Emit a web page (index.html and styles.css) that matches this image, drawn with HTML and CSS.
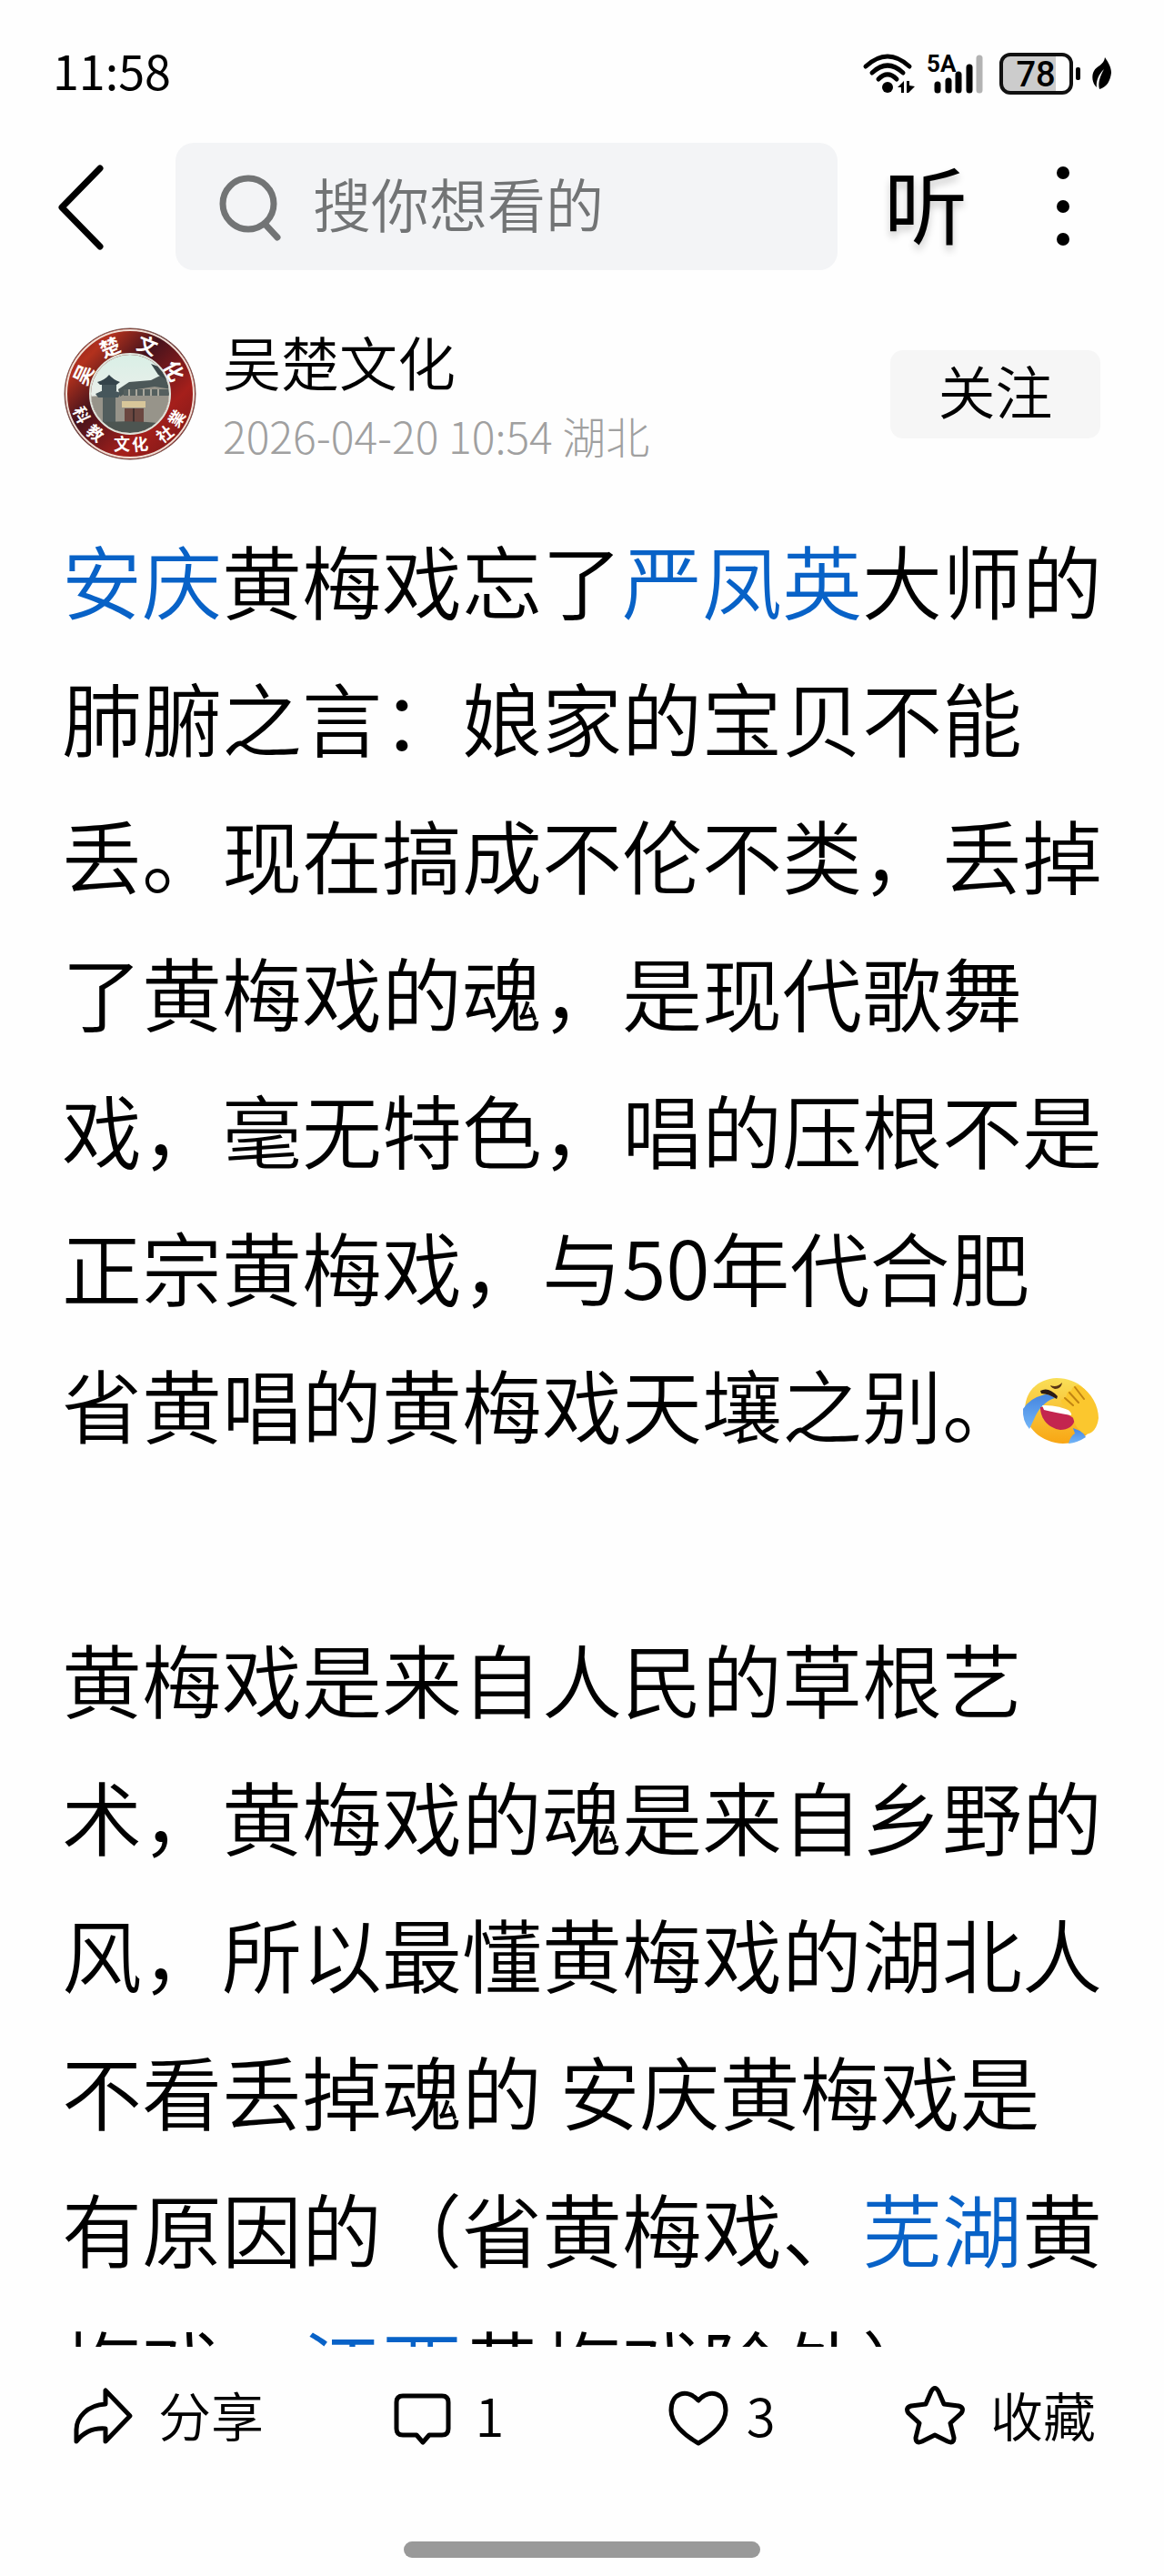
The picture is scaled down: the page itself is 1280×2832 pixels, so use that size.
FILE: index.html
```html
<!DOCTYPE html>
<html lang="zh-CN">
<head>
    <meta charset="UTF-8">
    <meta name="viewport" content="width=device-width, initial-scale=1.0">
    <title>吴楚文化</title>
    <link rel="stylesheet" href="styles.css">
</head>
<body>
    <!-- Status bar -->
    <div class="status-bar">
        <span class="time">11:58</span>
        <div class="status-icons">
            <svg class="wifi" width="58" height="46" viewBox="0 0 58 46">
                <g fill="none" stroke="#000" stroke-width="5" stroke-linecap="round">
                    <path d="M4 15Q28 -7 52 15"/>
                    <path d="M11 22Q28 6 45 22"/>
                    <path d="M18 29Q28 19 38 29"/>
                </g>
                <circle cx="28" cy="38" r="6"/>
                <path d="M39 38L46 31V44H43V38ZM49 31H52V36L58 37L51 44H49Z"/>
            </svg>
            <svg class="signal" width="66" height="46" viewBox="0 0 66 46">
                <text x="2" y="21" class="net">5A</text>
                <g stroke="#000" stroke-width="7" stroke-linecap="round">
                    <path d="M14 35V41M26 31V41M37 24V41M49 16V41"/>
                    <path d="M60 6V41" stroke="#b3b3b3"/>
                </g>
            </svg>
            <svg class="battery" width="90" height="46" viewBox="0 0 90 46">
                <path d="M12 2H62V44H12Q2 44 2 34V12Q2 2 12 2Z" fill="#ccc"/>
                <rect x="2" y="2" width="77" height="42" rx="10" fill="none" stroke="#111" stroke-width="4"/>
                <rect x="84" y="16" width="5" height="14" rx="2"/>
                <text x="40" y="37" class="level">78</text>
            </svg>
            <svg class="leaf" width="24" height="36" viewBox="0 0 24 36">
                <path d="M15 0C19 6 22 11 22 17C21 26 17 33 9 35C7 28 10 20 14 13C8 19 5 26 6 33C1 29 0 20 3 15C6 9 14 9 15 0Z"/>
            </svg>
        </div>
    </div>

    <!-- Top bar -->
    <header class="top-bar">
        <button class="icon-btn back" aria-label="返回">
            <svg width="58" height="100" viewBox="0 0 58 100">
                <path d="M50 8L8 51L50 94" fill="none" stroke="#000" stroke-width="7" stroke-linecap="round" stroke-linejoin="round"/>
            </svg>
        </button>
        <label class="search">
            <svg width="70" height="80" viewBox="0 0 70 80" fill="none" stroke="#727475" stroke-width="7" stroke-linecap="round">
                <circle cx="34" cy="37" r="28"/>
                <path d="M53 60L66 74"/>
            </svg>
            <input type="text" placeholder="搜你想看的" aria-label="搜索">
        </label>
        <button class="icon-btn listen">听</button>
        <button class="icon-btn more" aria-label="更多">
            <svg width="20" height="100" viewBox="0 0 20 100">
                <circle cx="10" cy="13" r="7"/>
                <circle cx="10" cy="50" r="7"/>
                <circle cx="10" cy="86" r="7"/>
            </svg>
        </button>
    </header>

    <!-- Author -->
    <section class="author">
        <svg class="avatar" width="146" height="146" viewBox="0 0 146 146">
            <defs>
                <linearGradient id="ring" x1="0" y1="0" x2="1" y2="1">
                    <stop offset="0" stop-color="#7a1a1c"/>
                    <stop offset="0.2" stop-color="#b3311d"/>
                    <stop offset="0.4" stop-color="#45131c"/>
                    <stop offset="0.7" stop-color="#a51f1b"/>
                    <stop offset="1" stop-color="#6d1618"/>
                </linearGradient>
                <linearGradient id="sky" x1="0" y1="0" x2="0" y2="1">
                    <stop offset="0" stop-color="#d9efe6"/>
                    <stop offset="0.5" stop-color="#e9efea"/>
                </linearGradient>
                <clipPath id="photo"><circle cx="73" cy="73" r="43"/></clipPath>
            </defs>
            <circle cx="73" cy="73" r="72" fill="url(#ring)" stroke="#76524c" stroke-width="1"/>
            <circle cx="73" cy="73" r="70" fill="none" stroke="#f0dfd5" stroke-width="2"/>
            <circle cx="73" cy="73" r="43" fill="url(#sky)"/>
            <g clip-path="url(#photo)">
                <path d="M26 76L60 74L64 66L72 62L104 58L120 56V120H26Z" fill="#97948a"/>
                <path d="M60 68L72 60L96 58L112 50L120 56V68L100 65L74 69L62 76Z" fill="#4c5858"/>
                <path d="M66 68H116V75H66Z" fill="#55605f"/>
                <path d="M72 68V75M80 68V75M88 68V75M96 68V75M104 68V75" stroke="#a9a79c" stroke-width="2"/>
                <path d="M37 60Q45 58 50 52Q54 57 62 60L58 63H40Z" fill="#34434a"/>
                <path d="M42 63H58V70H42ZM35 73L48 67L63 72L60 77H38Z" fill="#46565b"/>
                <path d="M43 77H57V112H43Z" fill="#525d5d"/>
                <path d="M96 40L107 44L114 58L104 52Z" fill="#3b4749"/>
                <path d="M64 81H90V88H64Z" fill="#d8c69a"/>
                <path d="M67 89H88V112H67Z" fill="#6b4740"/>
                <path d="M77 89V112" stroke="#402f2d" stroke-width="2"/>
                <path d="M26 106Q70 100 120 107V120H26Z" fill="#4d5551"/>
            </g>
            <circle cx="73" cy="73" r="44" fill="none" stroke="#dfe5dc" stroke-width="2"/>
            <g class="seal">
                <text y="8" transform="translate(22 52) rotate(-65)">吴</text>
                <text y="8" transform="translate(51 22) rotate(-23)">楚</text>
                <text y="8" transform="translate(92 20) rotate(22)">文</text>
                <text y="8" transform="translate(121 48) rotate(62)">化</text>
            </g>
            <g class="seal seal-bottom">
                <text y="7" transform="translate(20 96) rotate(65)">科</text>
                <text y="7" transform="translate(35 116) rotate(38)">教</text>
                <text y="7" transform="translate(64 128)">文</text>
                <text y="7" transform="translate(84 128) rotate(-6)">化</text>
                <text y="7" transform="translate(111 117) rotate(-38)">社</text>
                <text y="7" transform="translate(124 100) rotate(-58)">業</text>
            </g>
        </svg>
        <div class="author-info">
            <div class="author-name">吴楚文化</div>
            <div class="author-meta">2026-04-20 10:54 湖北</div>
        </div>
        <button class="follow">关注</button>
    </section>

    <!-- Post -->
    <main class="post">
        <p><a href="#">安庆</a>黄梅戏忘了<a href="#">严凤英</a>大师的肺腑之言：娘家的宝贝不能丢。现在搞成不伦不类，丢掉了黄梅戏的魂，是现代歌舞戏，毫无特色，唱的压根不是正宗黄梅戏，与50年代合肥省黄唱的黄梅戏天壤之别。<svg class="emoji" width="84" height="74" viewBox="0 0 84 74">
            <defs>
                <linearGradient id="face" x1="0" y1="0" x2="0" y2="1">
                    <stop offset="0" stop-color="#f9df58"/>
                    <stop offset="1" stop-color="#f8a614"/>
                </linearGradient>
                <linearGradient id="tear" x1="0" y1="0" x2="0" y2="1">
                    <stop offset="0" stop-color="#4585e0"/>
                    <stop offset="1" stop-color="#72b5f7"/>
                </linearGradient>
            </defs>
            <path d="M38 1C62 1 80 18 80 42C78 62 64 73 45 73C21 72 3 56 3 35C4 14 18 2 38 1Z" fill="url(#face)"/>
            <path d="M22 20Q28 17 36 23C26 26 19 34 15 42L8 57Q0 48 1 35Q9 23 22 20Z" fill="url(#tear)"/>
            <path d="M56 56L66 60L70 66Q61 72 51 73Q53 65 58 62Z" fill="url(#tear)"/>
            <path d="M20 33Q38 31 58 46C57 54 50 58 42 58C29 56 20 46 20 33Z" fill="#c3254f"/>
            <path d="M22 31Q39 30 55 38L54 42Q36 39 24 36Z" fill="#fff"/>
            <path d="M20 15Q29 10 39 21L38 24Q29 18 21 18Z" fill="#2b1a15"/>
            <path d="M31 9Q38 12 44 6Q43 13 36 13Q32 12 31 9Z" fill="#5a3615"/>
            <path d="M43 25Q48 23 49 20Q49 15 54 15Q56 8 62 9C75 15 84 31 84 45Q82 61 70 63Q60 59 57 48Q55 38 46 31Q42 28 43 25Z" fill="#fbc72e"/>
            <path d="M47 23L56 31M52 17L62 28M58 11L68 24" fill="none" stroke="#c18412" stroke-width="2" stroke-linecap="round"/>
        </svg></p>
        <p>黄梅戏是来自人民的草根艺术，黄梅戏的魂是来自乡野的风，所以最懂黄梅戏的湖北人不看丢掉魂的 安庆黄梅戏是有原因的（省黄梅戏、<a href="#">芜湖</a>黄梅戏、<a href="#">江西</a>黄梅戏除外）</p>
    </main>

    <!-- Actions -->
    <footer class="actions">
        <button class="action">
            <svg width="66" height="68" viewBox="0 0 66 68">
                <path d="M36 6V21C16 22 4 36 4 49V62C12 52 23 47 36 48V62L63 34Z"/>
            </svg>
            <span>分享</span>
        </button>
        <button class="action comment">
            <svg width="66" height="68" viewBox="0 0 66 68">
                <path d="M11 12H54Q61 12 61 19V48Q61 55 54 55H40L33 63L26 55H11Q4 55 4 48V19Q4 12 11 12Z"/>
            </svg>
            <span>1</span>
        </button>
        <button class="action like">
            <svg width="66" height="68" viewBox="0 0 66 68">
                <path d="M33 17C20 3 3 9 3 28C3 42 17 55 33 64C49 55 63 42 63 28C63 9 46 3 33 17Z"/>
            </svg>
            <span>3</span>
        </button>
        <button class="action">
            <svg width="66" height="68" viewBox="0 0 66 68">
                <path d="M29 7Q33 0 37 7L43 21L59 23Q66 25 62 31L50 42L54 58Q54 65 47 62L33 55L19 62Q12 65 12 58L16 42L4 31Q0 25 7 23L23 21Z"/>
            </svg>
            <span>收藏</span>
        </button>
    </footer>
    <div class="home-bar"></div>
</body>
</html>
```
FILE: styles.css
```css
* {
    box-sizing: border-box;
}
body {
    margin: 0;
    height: 100vh;
    display: flex;
    flex-direction: column;
    overflow: hidden;
    background: #fefefe;
    color: #000;
    font-family: "Noto Sans CJK SC", sans-serif;
    font-weight: 350;
}
button, input {
    font-family: inherit;
    font-weight: inherit;
    color: inherit;
    border: none;
    padding: 0;
    margin: 0;
    background: none;
}
svg {
    display: block;
    flex: none;
    overflow: visible;
}

/* status bar */
.status-bar {
    flex: none;
    display: flex;
    justify-content: space-between;
    align-items: center;
    height: 157px;
    padding: 4px 56px 0 58px;
}
.time {
    padding-bottom: 8px;
    font-size: 52px;
    line-height: 60px;
    font-weight: 400;
}
.status-icons {
    display: flex;
    align-items: center;
    gap: 11px;
}
.signal {
    margin-right: 5px;
}
.net {
    font-family: Roboto, sans-serif;
    font-size: 26px;
    font-weight: 700;
}
.level {
    font-family: Roboto, sans-serif;
    font-size: 38px;
    font-weight: 500;
    text-anchor: middle;
}

/* top bar */
.top-bar {
    flex: none;
    display: flex;
    align-items: center;
    height: 140px;
    padding: 0 101px 0 60px;
}
.back {
    margin-right: 75px;
}
.search {
    flex: 1;
    min-width: 0;
    display: flex;
    align-items: center;
    gap: 35px;
    height: 140px;
    padding: 0 46px;
    border-radius: 20px;
    background: #f3f4f6;
}
.search input {
    flex: 1;
    min-width: 0;
    height: 100px;
    padding-bottom: 10px;
    font-size: 64px;
    outline: none;
}
.search input::placeholder {
    color: #727475;
    opacity: 1;
}
.listen {
    margin: 0 95px 0 51px;
    padding-bottom: 10px;
    font-size: 92px;
    line-height: 100px;
    font-weight: 400;
    text-shadow: 0 6px 8px rgba(0, 0, 0, 0.2);
}

/* author */
.author {
    flex: none;
    display: flex;
    align-items: center;
    padding: 51px 70px 0 70px;
}
.author-info {
    flex: 1;
    margin-left: 29px;
    padding-top: 6px;
}
.author-name {
    font-size: 64px;
    line-height: 84px;
}
.author-meta {
    font-size: 48px;
    line-height: 80px;
    font-weight: 300;
    color: #a0a0a0;
}
.follow {
    width: 231px;
    height: 97px;
    padding-bottom: 10px;
    border-radius: 14px;
    background: #f6f6f6;
    font-size: 63px;
    line-height: 86px;
}
.seal {
    font-size: 22px;
    font-weight: 700;
    fill: #fff;
    text-anchor: middle;
}
.seal-bottom {
    font-size: 18px;
}

/* post */
.post {
    flex: 1;
    min-height: 0;
    overflow: hidden;
    padding: 42px 60px 0 68px;
    font-size: 88px;
    line-height: 151px;
    text-spacing-trim: space-all;
}
.post p {
    margin: 0 0 151px;
}
.post a {
    color: #0862c7;
    text-decoration: none;
}
.emoji {
    display: inline-block;
    vertical-align: -8px;
}

/* actions */
.actions {
    flex: none;
    display: flex;
    justify-content: space-between;
    align-items: center;
    height: 152px;
    padding: 0 75px 0 80px;
}
.action {
    display: flex;
    align-items: center;
    gap: 28px;
    font-size: 58px;
    line-height: 80px;
}
.action path {
    fill: none;
    stroke: #000;
    stroke-width: 5;
    stroke-linejoin: round;
}
.action span {
    padding-bottom: 4px;
}
.comment {
    margin-right: 38px;
    gap: 24px;
}
.like {
    gap: 20px;
}
.home-bar {
    flex: none;
    width: 392px;
    height: 18px;
    margin: 62px auto 20px;
    border-radius: 9px;
    background: #999;
}
```
